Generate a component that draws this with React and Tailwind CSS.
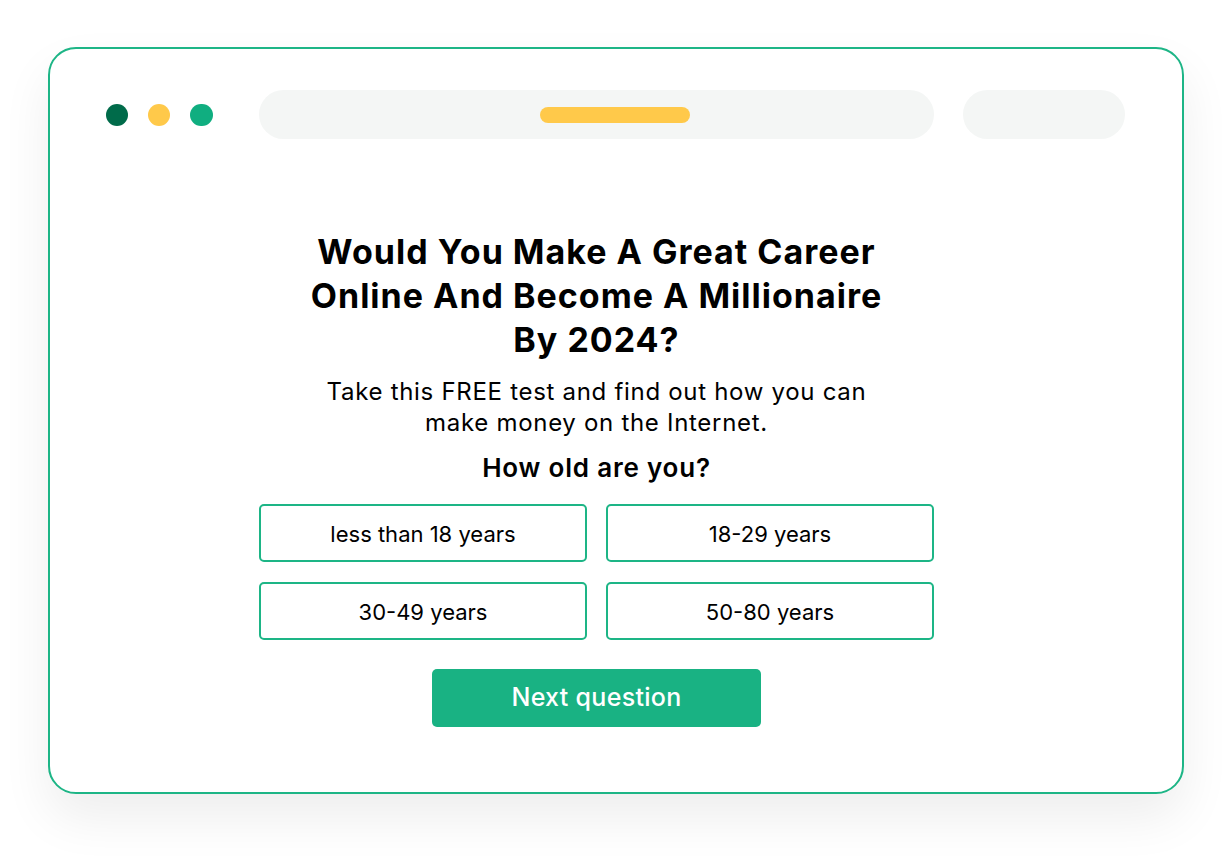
import React, { useState } from 'react';

const options = ['less than 18 years', '18-29 years', '30-49 years', '50-80 years'];

const App = () => {
  const [selected, setSelected] = useState(null);

  return (
    <div className="min-h-screen bg-white pt-[47px] pl-[48px]" style={{ fontFamily: 'Inter, "Noto Sans", sans-serif' }}>
      <div className="w-[1136px] h-[747px] bg-white border-2 border-[#1db586] rounded-[28px] shadow-[0_24px_50px_rgba(0,0,0,0.07)] pt-[41px]">
        {/* Browser bar */}
        <div className="flex items-center pl-[56px] pr-[57px]">
          <div className="flex items-center gap-[20px]">
            <span className="w-[22px] h-[22px] rounded-full bg-[#006b4a]"></span>
            <span className="w-[22px] h-[22px] rounded-full bg-[#ffc94a]"></span>
            <span className="w-[23px] h-[22px] rounded-full bg-[#10ae80]"></span>
          </div>
          <div className="ml-[46px] w-[675px] h-[49px] rounded-full bg-[#f4f6f5] flex items-center pl-[281px]">
            <span className="w-[150px] h-[16px] rounded-full bg-[#ffc94a]"></span>
          </div>
          <div className="ml-[29px] flex-1 h-[49px] rounded-full bg-[#f4f6f5]"></div>
        </div>

        {/* Quiz */}
        <div className="ml-[209px] w-[675px] mt-[91px] flex flex-col items-center text-center text-black">
          <h1 className="text-[34px] leading-[44px] font-bold tracking-[1px]">
            Would You Make A Great Career
            <br />
            Online And Become A Millionaire
            <br />
            By 2024?
          </h1>
          <p className="mt-[14px] text-[24px] leading-[31px] tracking-[0.7px]">
            Take this FREE test and find out how you can
            <br />
            make money on the Internet.
          </p>
          <p className="mt-[14px] text-[26px] leading-[32px] font-semibold tracking-[0.8px]">How old are you?</p>

          <div className="mt-[20px] w-full grid grid-cols-2 gap-x-[19px] gap-y-[20px]">
            {options.map((opt, i) => (
              <button
                key={opt}
                onClick={() => setSelected(i)}
                className={`h-[58px] pt-[2px] rounded-[5px] border-2 border-[#1db586] text-[22px] ${
                  selected === i ? 'bg-[#e8f7f1]' : 'bg-white'
                }`}
              >
                {opt}
              </button>
            ))}
          </div>

          <button className="mt-[29px] w-[329px] h-[58px] rounded-[5px] bg-[#19b283] text-white text-[25px] font-medium tracking-[0.3px]">
            Next question
          </button>
        </div>
      </div>
    </div>
  );
};

export default App;
